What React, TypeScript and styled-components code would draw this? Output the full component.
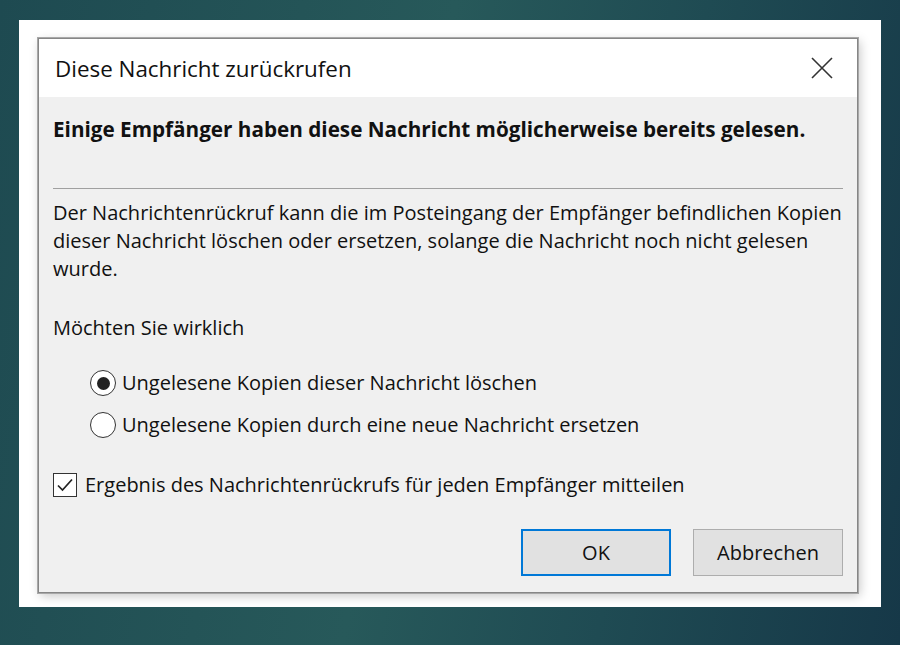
import styled, {createGlobalStyle} from "styled-components";

const GlobalStyle = createGlobalStyle`
  html, body {
    margin: 0;
    padding: 0;
  }
  body {
    width: 900px;
    height: 645px;
    overflow: hidden;
    background: linear-gradient(100deg, #1e4a51 0%, #27595a 45%, #1f4b53 70%, #163848 100%);
    font-family: "Open Sans", "Noto Sans", sans-serif;
  }
`

const Stage = styled.div`
  width: 900px;
  height: 645px;
  padding: 20px 19px 38px 19px;
  box-sizing: border-box;
`

const Frame = styled.div`
  width: 862px;
  height: 587px;
  background: #fff;
  padding: 18px 0 0 19px;
  box-sizing: border-box;
`

const Dialog = styled.div`
  width: 820px;
  height: 555px;
  box-sizing: border-box;
  border: 1px solid #868686;
  box-shadow: 0 0 0 1px #a8a8a8, 2px 3px 10px rgba(0, 0, 0, 0.22);
  display: flex;
  flex-direction: column;
  background: #f0f0f0;
`

const TitleBar = styled.div`
  height: 58px;
  background: #fff;
  display: flex;
  align-items: center;
  justify-content: space-between;
  padding: 0 24px 0 16px;
  color: #111;
  font-size: 22.4px;
`

const Body = styled.div`
  flex: 1;
  padding: 18px 14px 16px 14px;
  display: flex;
  flex-direction: column;
  color: #111;
  font-size: 20px;
  line-height: 28px;
`

const Heading = styled.div`
  font-weight: 700;
  font-size: 20.7px;
  white-space: nowrap;
`

const Separator = styled.hr`
  border: none;
  border-top: 1px solid #a0a0a0;
  margin: 45px 0 10px 0;
`

const Paragraph = styled.div`
  white-space: nowrap;
`

const Question = styled.div`
  margin-top: 31px;
`

const Options = styled.div`
  display: flex;
  flex-direction: column;
  gap: 14px;
  margin: 27px 0 0 37px;
`

const OptionRow = styled.label`
  display: flex;
  align-items: center;
  gap: 6px;
`

const Radio = styled.span<{ $checked?: boolean }>`
  width: 26px;
  height: 26px;
  border: 1.5px solid #333;
  border-radius: 50%;
  background: #fff;
  display: flex;
  align-items: center;
  justify-content: center;
  box-sizing: border-box;

  &::after {
    content: "";
    display: ${p => (p.$checked ? "block" : "none")};
    width: 13px;
    height: 13px;
    border-radius: 50%;
    background: #222;
  }
`

const CheckRow = styled.label`
  display: flex;
  align-items: center;
  gap: 8px;
  margin-top: 32px;
`

const Checkbox = styled.span`
  width: 24px;
  height: 24px;
  border: 1.5px solid #333;
  background: #fff;
  box-sizing: border-box;
  display: flex;
  align-items: center;
  justify-content: center;
`

const Buttons = styled.div`
  margin-top: auto;
  display: flex;
  justify-content: flex-end;
  gap: 22px;
`

const Button = styled.button<{ $primary?: boolean }>`
  width: 150px;
  height: 47px;
  box-sizing: border-box;
  background: #e1e1e1;
  border: ${p => (p.$primary ? "2px solid #0078d7" : "1px solid #adadad")};
  font-family: inherit;
  font-size: 20px;
  color: #111;
  padding: 0;
`

const CloseIcon = () => (
    <svg width="22" height="22" viewBox="0 0 22 22">
        <path d="M1 1 L21 21 M21 1 L1 21" stroke="#333" strokeWidth="1.6"/>
    </svg>
)

export default function App() {
    return (
        <>
            <GlobalStyle/>
            <Stage>
                <Frame>
                    <Dialog>
                        <TitleBar>
                            <span>Diese Nachricht zurückrufen</span>
                            <CloseIcon/>
                        </TitleBar>
                        <Body>
                            <Heading>Einige Empfänger haben diese Nachricht möglicherweise bereits gelesen.</Heading>
                            <Separator/>
                            <Paragraph>
                                Der Nachrichtenrückruf kann die im Posteingang der Empfänger befindlichen Kopien<br/>
                                dieser Nachricht löschen oder ersetzen, solange die Nachricht noch nicht gelesen<br/>
                                wurde.
                            </Paragraph>
                            <Question>Möchten Sie wirklich</Question>
                            <Options>
                                <OptionRow><Radio $checked/>Ungelesene Kopien dieser Nachricht löschen</OptionRow>
                                <OptionRow><Radio/>Ungelesene Kopien durch eine neue Nachricht ersetzen</OptionRow>
                            </Options>
                            <CheckRow>
                                <Checkbox>
                                    <svg width="18" height="18" viewBox="0 0 18 18">
                                        <path d="M2 9.5 L6.5 14 L16 3.5" fill="none" stroke="#222" strokeWidth="1.7"/>
                                    </svg>
                                </Checkbox>
                                Ergebnis des Nachrichtenrückrufs für jeden Empfänger mitteilen
                            </CheckRow>
                            <Buttons>
                                <Button $primary>OK</Button>
                                <Button>Abbrechen</Button>
                            </Buttons>
                        </Body>
                    </Dialog>
                </Frame>
            </Stage>
        </>
    );
}
